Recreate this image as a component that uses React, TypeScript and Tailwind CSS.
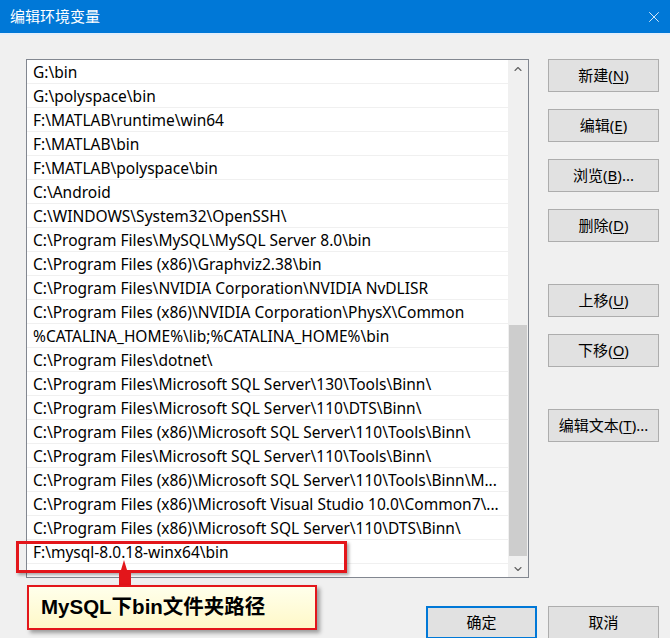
import React from 'react';
import { ChevronUp, ChevronDown, X } from 'lucide-react';

const paths = [
  'G:\\bin',
  'G:\\polyspace\\bin',
  'F:\\MATLAB\\runtime\\win64',
  'F:\\MATLAB\\bin',
  'F:\\MATLAB\\polyspace\\bin',
  'C:\\Android',
  'C:\\WINDOWS\\System32\\OpenSSH\\',
  'C:\\Program Files\\MySQL\\MySQL Server 8.0\\bin',
  'C:\\Program Files (x86)\\Graphviz2.38\\bin',
  'C:\\Program Files\\NVIDIA Corporation\\NVIDIA NvDLISR',
  'C:\\Program Files (x86)\\NVIDIA Corporation\\PhysX\\Common',
  '%CATALINA_HOME%\\lib;%CATALINA_HOME%\\bin',
  'C:\\Program Files\\dotnet\\',
  'C:\\Program Files\\Microsoft SQL Server\\130\\Tools\\Binn\\',
  'C:\\Program Files\\Microsoft SQL Server\\110\\DTS\\Binn\\',
  'C:\\Program Files (x86)\\Microsoft SQL Server\\110\\Tools\\Binn\\',
  'C:\\Program Files\\Microsoft SQL Server\\110\\Tools\\Binn\\',
  'C:\\Program Files (x86)\\Microsoft SQL Server\\110\\Tools\\Binn\\M...',
  'C:\\Program Files (x86)\\Microsoft Visual Studio 10.0\\Common7\\...',
  'C:\\Program Files (x86)\\Microsoft SQL Server\\110\\DTS\\Binn\\',
  'F:\\mysql-8.0.18-winx64\\bin',
];

const cjk = "font-['Segoe_UI','Noto_Sans','Noto_Sans_CJK_SC',sans-serif]";

type BtnProps = { label: string; hotkey?: string; suffix?: string; primary?: boolean };

const WinButton: React.FC<BtnProps> = ({ label, hotkey, suffix, primary }) => (
  <button
    className={
      'flex h-[33px] w-[111px] items-center justify-center bg-[#e1e1e1] text-[15px] text-black ' +
      (primary ? 'border-2 border-[#0078d7]' : 'border border-[#adadad]')
    }
  >
    {label}
    {hotkey && (
      <>
        (<span className="underline underline-offset-2">{hotkey}</span>)
      </>
    )}
    {suffix}
  </button>
);

export default function App() {
  return (
    <div className={`relative h-[638px] w-[670px] overflow-hidden bg-[#f0f0f0] ${cjk}`}>
      {/* title bar */}
      <div className="flex h-[33px] items-center justify-between bg-[#0078d7] pl-[10px] pr-[7px] text-white">
        <span className="text-[15px]">编辑环境变量</span>
        <X size={18} strokeWidth={1.1} />
      </div>
      <div className="h-[2px] bg-[#e3eefa]" />

      {/* body */}
      <div className="flex gap-[19px] pl-[26px] pr-[11px] pt-[24px]">
        <div className="flex h-[519px] w-[503px] border border-[#828790] bg-white">
          <div className="flex-1 overflow-hidden">
            {paths.map((p) => (
              <div
                key={p}
                className="flex h-[24px] items-center whitespace-nowrap border-b border-[#f0f0f0] pl-[6px] pt-[2px] text-[15.5px] text-black"
              >
                {p}
              </div>
            ))}
          </div>
          <div className="flex w-[20px] flex-col bg-[#f0f0f0]">
            <div className="flex h-[17px] items-center justify-center text-[#606060]">
              <ChevronUp size={12} strokeWidth={2.2} />
            </div>
            <div className="flex flex-1 flex-col">
              <div className="h-[248px]" />
              <div className="mx-px h-[231px] bg-[#cdcdcd]" />
            </div>
            <div className="flex h-[17px] items-center justify-center text-[#606060]">
              <ChevronDown size={12} strokeWidth={2.2} />
            </div>
          </div>
        </div>

        <div className="flex flex-col">
          <div className="flex flex-col gap-[17px]">
            <WinButton label="新建" hotkey="N" />
            <WinButton label="编辑" hotkey="E" />
            <WinButton label="浏览" hotkey="B" suffix="..." />
            <WinButton label="删除" hotkey="D" />
          </div>
          <div className="mt-[42px] flex flex-col gap-[17px]">
            <WinButton label="上移" hotkey="U" />
            <WinButton label="下移" hotkey="O" />
          </div>
          <div className="mt-[42px]">
            <WinButton label="编辑文本" hotkey="T" suffix="..." />
          </div>
        </div>
      </div>

      {/* footer */}
      <div className="flex justify-end gap-[11px] pr-[11px] pt-[28px]">
        <WinButton label="确定" primary />
        <WinButton label="取消" />
      </div>

      {/* annotation overlay */}
      <div className="absolute left-[16px] top-[541px] h-[32px] w-[331px] border-[3px] border-[#e3161b] shadow-[2px_2px_3px_rgba(0,0,0,0.35)]" />
      <svg className="absolute left-[112px] top-[560px]" width="26" height="28" viewBox="0 0 26 28">
        <polygon points="12,0 9,10 7,10 7,27 19,27 19,10 15,10" fill="#e3161b" />
      </svg>
      <div className="absolute left-[27px] top-[585px] flex h-[45px] w-[290px] items-center border-2 border-[#e3161b] bg-gradient-to-b from-[#ffffeb] to-[#fff8c8] pl-[12px] shadow-[3px_3px_4px_rgba(0,0,0,0.35)]">
        <span className="text-[20.5px] font-bold text-black font-['Liberation_Sans','Noto_Sans_CJK_SC',sans-serif]">
          MySQL下bin文件夹路径
        </span>
      </div>
    </div>
  );
}
